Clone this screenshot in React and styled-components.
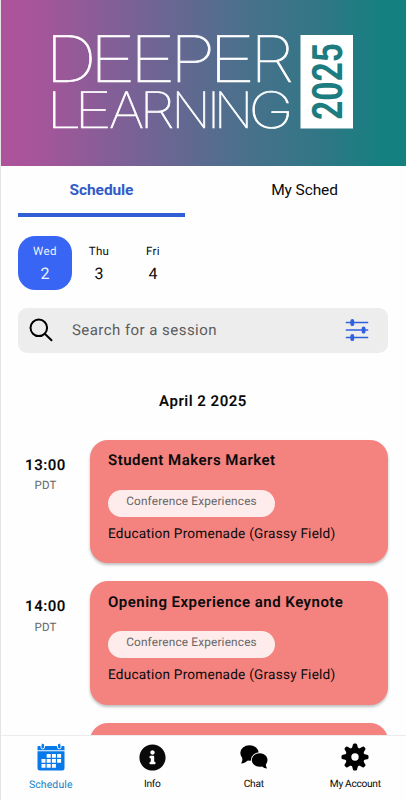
import styled, { createGlobalStyle } from "styled-components"
import { FaInfoCircle } from "react-icons/fa"

const GlobalStyle = createGlobalStyle`
  * {
    box-sizing: border-box;
  }
  body {
    margin: 0;
    background: #fefefe;
    font-family: Roboto, "Liberation Sans", sans-serif;
    text-rendering: geometricPrecision;
  }
`

const Screen = styled.div`
  display: flex;
  flex-direction: column;
  height: 800px;
  overflow: hidden;
  color: #0a0a0a;
  border-left: 1px solid #e4e4e4;
`

const Banner = styled.header`
  flex: none;
  height: 166px;
  margin-left: -1px;
  background: linear-gradient(90deg, #ae529b 0%, #a5559a 10%, #756395 35%, #4a708c 60%, #2f7785 80%, #158080 94%, #158080 100%);

  svg {
    display: block;
  }
`

const LogoText = styled.text`
  font-family: Inter, sans-serif;
  font-weight: 100;
  fill: #fff;
  stroke: #fff;
  stroke-width: 0.7px;
`

const YearText = styled.text`
  font-family: Roboto, sans-serif;
  font-weight: 700;
  fill: #1c7c80;
`

const Tabs = styled.nav`
  flex: none;
  display: flex;
  gap: 36px;
  padding: 0 18px 0 17px;
`

const Tab = styled.button`
  flex: 1;
  height: 51px;
  padding: 1px 0 0;
  border: 0;
  border-bottom: 4px solid ${({ $active }) => ($active ? "#315fd3" : "transparent")};
  background: none;
  font: ${({ $active }) => ($active ? 700 : 400)} 15.5px/46px Roboto, sans-serif;
  letter-spacing: -0.1px;
  color: ${({ $active }) => ($active ? "#315bc8" : "#0a0a0a")};
`

const Days = styled.div`
  flex: none;
  display: flex;
  margin: 19px 17px 0;
`

const Day = styled.div`
  width: 54px;
  height: 54px;
  padding-top: 7px;
  border-radius: 17px;
  text-align: center;
  background: ${({ $active }) => ($active ? "#3865f4" : "transparent")};
  color: ${({ $active }) => ($active ? "#eef2ff" : "#0a0a0a")};
`

const DayName = styled.div`
  font-size: 11.5px;
  line-height: 16px;
  letter-spacing: 0.4px;
`

const DayNumber = styled.div`
  margin-top: 6px;
  font-size: 16px;
  line-height: 18px;
`

const SearchBar = styled.div`
  flex: none;
  display: flex;
  align-items: center;
  height: 45px;
  margin: 18px 18px 0 17px;
  padding: 0 19px 1px 11px;
  border-radius: 9px;
  background: #ededed;
`

const Placeholder = styled.span`
  flex: 1;
  margin-left: 19px;
  font-size: 15px;
  letter-spacing: 0.45px;
  color: #5c5c5c;
`

const List = styled.main`
  flex: 1;
  min-height: 0;
  overflow: hidden;
  padding: 37px 18px 0 0;
`

const DateTitle = styled.h2`
  margin: 0 0 27.5px 17px;
  font-size: 15px;
  font-weight: 600;
  line-height: 22px;
  letter-spacing: 0.5px;
  text-align: center;
`

const Row = styled.section`
  display: flex;
  margin-bottom: 18px;
`

const TimeSlot = styled.div`
  width: 89px;
  padding-top: 15px;
  text-align: center;
`

const Time = styled.div`
  font-size: 15px;
  font-weight: 600;
  line-height: 20px;
  letter-spacing: 0.5px;
`

const Zone = styled.div`
  margin-top: 2.5px;
  font-size: 11.5px;
  line-height: 16px;
  letter-spacing: 0.2px;
  color: #666;
`

const Card = styled.article`
  flex: 1;
  height: 123.5px;
  padding: 10.5px 18px;
  border-radius: 18px;
  background: #f4827f;
  box-shadow: 0 2px 3px rgba(0, 0, 0, 0.25);
`

const CardTitle = styled.h3`
  margin: 0;
  font-size: 15px;
  font-weight: 600;
  line-height: 20px;
  letter-spacing: 0.48px;
  white-space: nowrap;
`

const Tag = styled.span`
  display: block;
  width: 167px;
  height: 27px;
  margin-top: 19.5px;
  border-radius: 14px;
  background: #feecec;
  font-size: 11.8px;
  line-height: 23px;
  letter-spacing: 0.18px;
  text-align: center;
  color: #666;
`

const Place = styled.p`
  margin: 7px 0 0;
  font-size: 13.6px;
  line-height: 20px;
  letter-spacing: 0.22px;
  white-space: nowrap;
`

const BottomBar = styled.footer`
  flex: none;
  display: flex;
  height: 65px;
  margin-left: -1px;
  border-top: 1px solid #ececec;
  background: #fefefe;
`

const BottomItem = styled.div`
  flex: 1;
  display: flex;
  flex-direction: column;
  align-items: center;
  font-size: ${({ $active }) => ($active ? "10.5px" : "10.2px")};
  line-height: 14px;
  letter-spacing: ${({ $active }) => ($active ? "0.1px" : "-0.3px")};
  color: ${({ $active }) => ($active ? "#1a7fc4" : "#0a0a0a")};
`

const IconBox = styled.div`
  display: flex;
  align-items: center;
  justify-content: center;
  height: 42px;
`

// the logo letters are wider than the font's own, so each gets its own width
const deeper = [
  ["D", 45.5, 51],
  ["E", 89, 47],
  ["E", 129, 47],
  ["P", 169.5, 46],
  ["E", 208.5, 47],
  ["R", 250, 44],
]

const learning = [
  ["L", 46.5, 35],
  ["E", 74, 38],
  ["A", 109, 35],
  ["R", 139.5, 35],
  ["N", 171.5, 39],
  ["I", 207, 13],
  ["N", 214, 39],
  ["G", 248.5, 45],
]

const Word = ({ letters, size, y }) => (
  <LogoText fontSize={size} y={y}>
    {letters.map(([letter, x, width], i) => (
      <tspan key={i} x={x} textLength={width} lengthAdjust="spacingAndGlyphs">
        {letter}
      </tspan>
    ))}
  </LogoText>
)

const SearchIcon = () => (
  <svg width="24" height="24" viewBox="0 0 24 24" fill="none" stroke="#000" strokeWidth="2" strokeLinecap="round">
    <circle cx="9.8" cy="9.8" r="8.3" />
    <path d="M15.8 15.8L22.5 22.3" />
  </svg>
)

const FilterIcon = () => (
  <svg width="24" height="24" viewBox="0 0 24 24" fill="none" stroke="#315fe0" strokeLinecap="round">
    <path d="M1.5 4.5H22.5M1.5 12H22.5M1.5 19.5H22.5" strokeWidth="1.7" />
    <path d="M7.3 2.8V6.2M18.6 10.3V13.7M7.3 17.8V21.2" strokeWidth="3.8" />
  </svg>
)

const CalendarIcon = () => (
  <svg width="28" height="28" viewBox="0 0 28 28">
    <path d="M1.5 3H26.5Q27.5 3 27.5 4V7.3H.5V4Q.5 3 1.5 3Z" fill="#0879e8" />
    <path d="M.5 8.3H27.5V25Q27.5 27.5 25 27.5H3Q.5 27.5 .5 25Z" fill="#0879e8" />
    <g fill="#0879e8" stroke="#fff" strokeWidth="1">
      <rect x="4" y="0.3" width="3.5" height="5.6" rx="1.7" />
      <rect x="20.5" y="0.3" width="3.5" height="5.6" rx="1.7" />
    </g>
    <path
      d="M9.7 11h4v3.8h-4zM14.9 11h4v3.8h-4zM20.1 11h4v3.8h-4zM4.5 16h4v3.8h-4zM9.7 16h4v3.8h-4zM14.9 16h4v3.8h-4zM20.1 16h4v3.8h-4zM4.5 21h4v3.8h-4zM9.7 21h4v3.8h-4zM14.9 21h4v3.8h-4z"
      fill="#fff"
    />
  </svg>
)

const ChatIcon = () => (
  <svg width="28" height="24" viewBox="0 0 28 24">
    <ellipse cx="9.5" cy="8" rx="9.2" ry="7.7" />
    <path d="M2 11Q3.2 15 1.2 18.8Q6 18 8.5 14.5Z" />
    <path
      d="M19.7 8.2C24.2 8.2 27.5 11.2 27.5 15Q27.5 17.6 25.8 19.4Q25.8 21.6 27.3 23.4Q24 23.2 22 21.4Q20.8 21.7 19.7 21.7C15.3 21.7 11.8 18.8 11.8 15S15.3 8.2 19.7 8.2Z"
      stroke="#fefefe"
      strokeWidth="1.8"
      paintOrder="stroke"
    />
  </svg>
)

const GearIcon = () => (
  <svg width="28" height="28" viewBox="-14 -14 28 28">
    {[0, 45, 90, 135, 180, 225, 270, 315].map((angle) => (
      <path
        key={angle}
        transform={`rotate(${angle})`}
        d="M-3.8-8Q-2.5-9.5-2.2-12Q-2-13.5-.9-13.5H.9Q2-13.5 2.2-12Q2.5-9.5 3.8-8Z"
      />
    ))}
    <circle r="6.6" fill="none" stroke="#000" strokeWidth="5.8" />
  </svg>
)

const sessions = [
  { time: "13:00", title: "Student Makers Market" },
  { time: "14:00", title: "Opening Experience and Keynote" },
  { time: "", title: "" },
]

const menu = [
  { label: "Schedule", icon: <CalendarIcon />, active: true },
  { label: "Info", icon: <FaInfoCircle size={27} /> },
  { label: "Chat", icon: <ChatIcon /> },
  { label: "My Account", icon: <GearIcon /> },
]

const App = () => {
  return (
    <>
      <GlobalStyle />
      <Screen>
        <Banner>
          <svg width="406" height="166" viewBox="0 0 406 166">
            <Word letters={deeper} size={64} y={81.5} />
            <Word letters={learning} size={50} y={128} />
            <rect x="300.5" y="35" width="52.5" height="93.5" fill="#fff" />
            <YearText
              fontSize="42"
              transform="translate(342 120) rotate(-90)"
              textLength="77"
              lengthAdjust="spacingAndGlyphs"
            >
              2025
            </YearText>
          </svg>
        </Banner>
        <Tabs>
          <Tab $active>Schedule</Tab>
          <Tab>My Sched</Tab>
        </Tabs>
        <Days>
          <Day $active>
            <DayName>Wed</DayName>
            <DayNumber>2</DayNumber>
          </Day>
          <Day>
            <DayName>Thu</DayName>
            <DayNumber>3</DayNumber>
          </Day>
          <Day>
            <DayName>Fri</DayName>
            <DayNumber>4</DayNumber>
          </Day>
        </Days>
        <SearchBar>
          <SearchIcon />
          <Placeholder>Search for a session</Placeholder>
          <FilterIcon />
        </SearchBar>
        <List>
          <DateTitle>April 2 2025</DateTitle>
          {sessions.map(({ time, title }, i) => (
            <Row key={i}>
              <TimeSlot>
                {time && <Time>{time}</Time>}
                {time && <Zone>PDT</Zone>}
              </TimeSlot>
              <Card>
                {title && (
                  <>
                    <CardTitle>{title}</CardTitle>
                    <Tag>Conference Experiences</Tag>
                    <Place>Education Promenade (Grassy Field)</Place>
                  </>
                )}
              </Card>
            </Row>
          ))}
        </List>
        <BottomBar>
          {menu.map(({ label, icon, active }) => (
            <BottomItem key={label} $active={active}>
              <IconBox>{icon}</IconBox>
              {label}
            </BottomItem>
          ))}
        </BottomBar>
      </Screen>
    </>
  )
}

export default App
